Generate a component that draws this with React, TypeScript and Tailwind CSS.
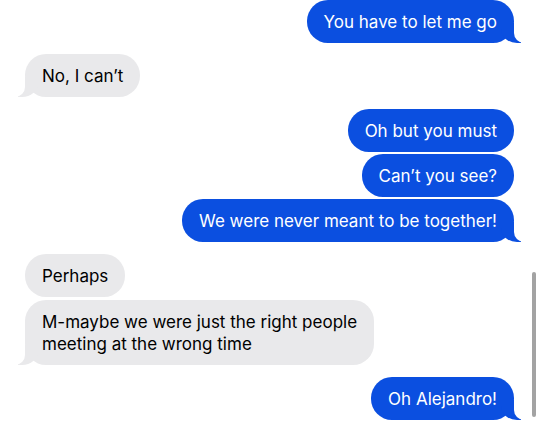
import React from "react";

type Msg = { text: string[]; me: boolean; tail: boolean; gap: number };

const msgs: Msg[] = [
  { text: ["You have to let me go"], me: true, tail: true, gap: 0 },
  { text: ["No, I can\u2019t"], me: false, tail: true, gap: 11 },
  { text: ["Oh but you must"], me: true, tail: false, gap: 12 },
  { text: ["Can\u2019t you see?"], me: true, tail: false, gap: 2 },
  { text: ["We were never meant to be together!"], me: true, tail: true, gap: 2 },
  { text: ["Perhaps"], me: false, tail: false, gap: 12 },
  { text: ["M-maybe we were just the right people", "meeting at the wrong time"], me: false, tail: true, gap: 3 },
  { text: ["Oh Alejandro!"], me: true, tail: true, gap: 12 },
];

function Bubble({ m }: { m: Msg }) {
  return (
    <div className={m.me ? "flex justify-end" : "flex justify-start"} style={{ marginTop: m.gap }}>
      <div
        className={
          m.me
            ? "relative rounded-[21px] bg-[#0b4fe0] text-white px-[17px] py-[10.5px] text-[17px] leading-[22px]"
            : "relative rounded-[21px] bg-[#e9e9eb] text-black px-[17px] py-[10.5px] text-[17px] leading-[22px]"
        }
      >
        {m.text.map((t, i) => (
          <div key={i} className="relative z-10 whitespace-nowrap">
            {t}
          </div>
        ))}
        {m.tail && m.me && (
          <>
            <div className="absolute bottom-0 right-[-7px] h-[20px] w-[20px] bg-[#0b4fe0] rounded-bl-[16px_14px]" />
            <div className="absolute bottom-0 right-[-26px] h-[20px] w-[26px] bg-white rounded-bl-[10px]" />
          </>
        )}
        {m.tail && !m.me && (
          <>
            <div className="absolute bottom-0 left-[-7px] h-[20px] w-[20px] bg-[#e9e9eb] rounded-br-[16px_14px]" />
            <div className="absolute bottom-0 left-[-26px] h-[20px] w-[26px] bg-white rounded-br-[10px]" />
          </>
        )}
      </div>
    </div>
  );
}

export default function App() {
  return (
    <div
      className="relative w-[540px] h-[422px] overflow-hidden bg-white pl-[25px] pr-[26px]"
      style={{ fontFamily: "Inter, 'Noto Sans', sans-serif" }}
    >
      <div className="flex flex-col">
        {msgs.map((m, i) => (
          <Bubble key={i} m={m} />
        ))}
      </div>
      <div className="absolute z-20 right-[4px] top-[272px] w-[4px] h-[145px] rounded-full bg-[#a3a3a3]" />
    </div>
  );
}
